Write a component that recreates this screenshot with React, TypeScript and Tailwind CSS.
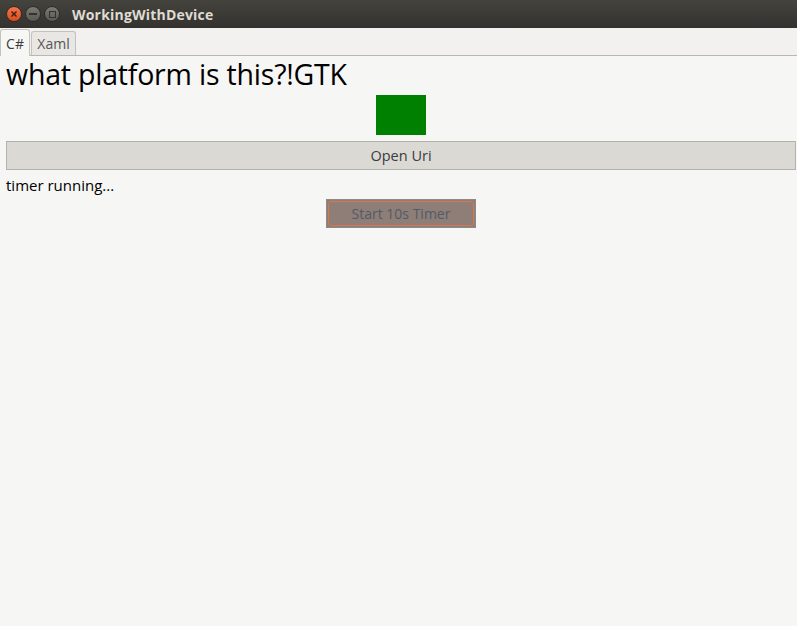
import React from "react";

export default function App() {
  return (
    <div className="w-[797px] h-[626px] flex flex-col bg-[#f6f6f5] overflow-hidden" style={{ fontFamily: "'Open Sans', 'DejaVu Sans', sans-serif" }}>
      {/* Title bar */}
      <div className="h-[28px] flex items-center bg-gradient-to-b from-[#45433e] to-[#34322e] shrink-0">
        <div className="flex items-center gap-[3px] pl-[6px]">
          <div className="w-[16px] h-[16px] rounded-full bg-gradient-to-b from-[#f2774a] to-[#db4a1c] flex items-center justify-center border border-[#3a2a22]">
            <svg width="8" height="8" viewBox="0 0 8 8"><path d="M1.5 1.5 L6.5 6.5 M6.5 1.5 L1.5 6.5" stroke="#3b1d10" strokeWidth="1.4" /></svg>
          </div>
          <div className="w-[16px] h-[16px] rounded-full bg-gradient-to-b from-[#7c7a74] to-[#5a5853] flex items-center justify-center border border-[#2e2d2a]">
            <div className="w-[8px] h-[1.5px] bg-[#34322f]" />
          </div>
          <div className="w-[16px] h-[16px] rounded-full bg-gradient-to-b from-[#7c7a74] to-[#5a5853] flex items-center justify-center border border-[#2e2d2a]">
            <div className="w-[7px] h-[7px] border border-[#34322f]" />
          </div>
        </div>
        <div className="ml-[12px] text-[14px] font-bold text-[#dfdbd2] tracking-[0.2px]">WorkingWithDevice</div>
      </div>
      {/* Tabs */}
      <div className="h-[28px] flex items-end border-b border-[#b9b7b0] bg-[#f2f1f0] shrink-0 relative">
        <div className="h-[27px] w-[30px] flex items-center justify-center text-[14px] text-[#3c3c3c] bg-[#f6f6f5] border border-b-0 border-[#c4c2bc] rounded-t-[3px] mb-[-1px] relative z-10">C#</div>
        <div className="h-[24px] w-[45px] ml-[1px] flex items-center justify-center text-[14px] text-[#555] bg-[#e8e7e4] border border-b-0 border-[#c4c2bc] rounded-t-[3px]">Xaml</div>
      </div>
      {/* Content */}
      <div className="flex-1 flex flex-col pl-[6px] pr-[1px] pt-[1px]">
        <div className="text-[28.5px] leading-[34px] text-black tracking-[-0.2px]">what platform is this?!GTK</div>
        <div className="flex justify-center mt-[4px]">
          <div className="w-[50px] h-[40px] bg-[#008000]" />
        </div>
        <div className="mt-[6px] h-[29px] bg-[#dad9d4] border border-[#b3b1ab] flex items-center justify-center text-[14.5px] text-[#3c3c3c]">Open Uri</div>
        <div className="mt-[5px] text-[15px] leading-[20px] text-black">timer running...</div>
        <div className="flex justify-center mt-[4px]">
          <div className="w-[150px] h-[29px] border border-[#8a8a8a] bg-[#8e7e77] p-[1px]">
            <div className="w-full h-full border border-[#d9764a] rounded-[3px] flex items-center justify-center text-[14px] text-[#4f5c68]">Start 10s Timer</div>
          </div>
        </div>
      </div>
    </div>
  );
}
